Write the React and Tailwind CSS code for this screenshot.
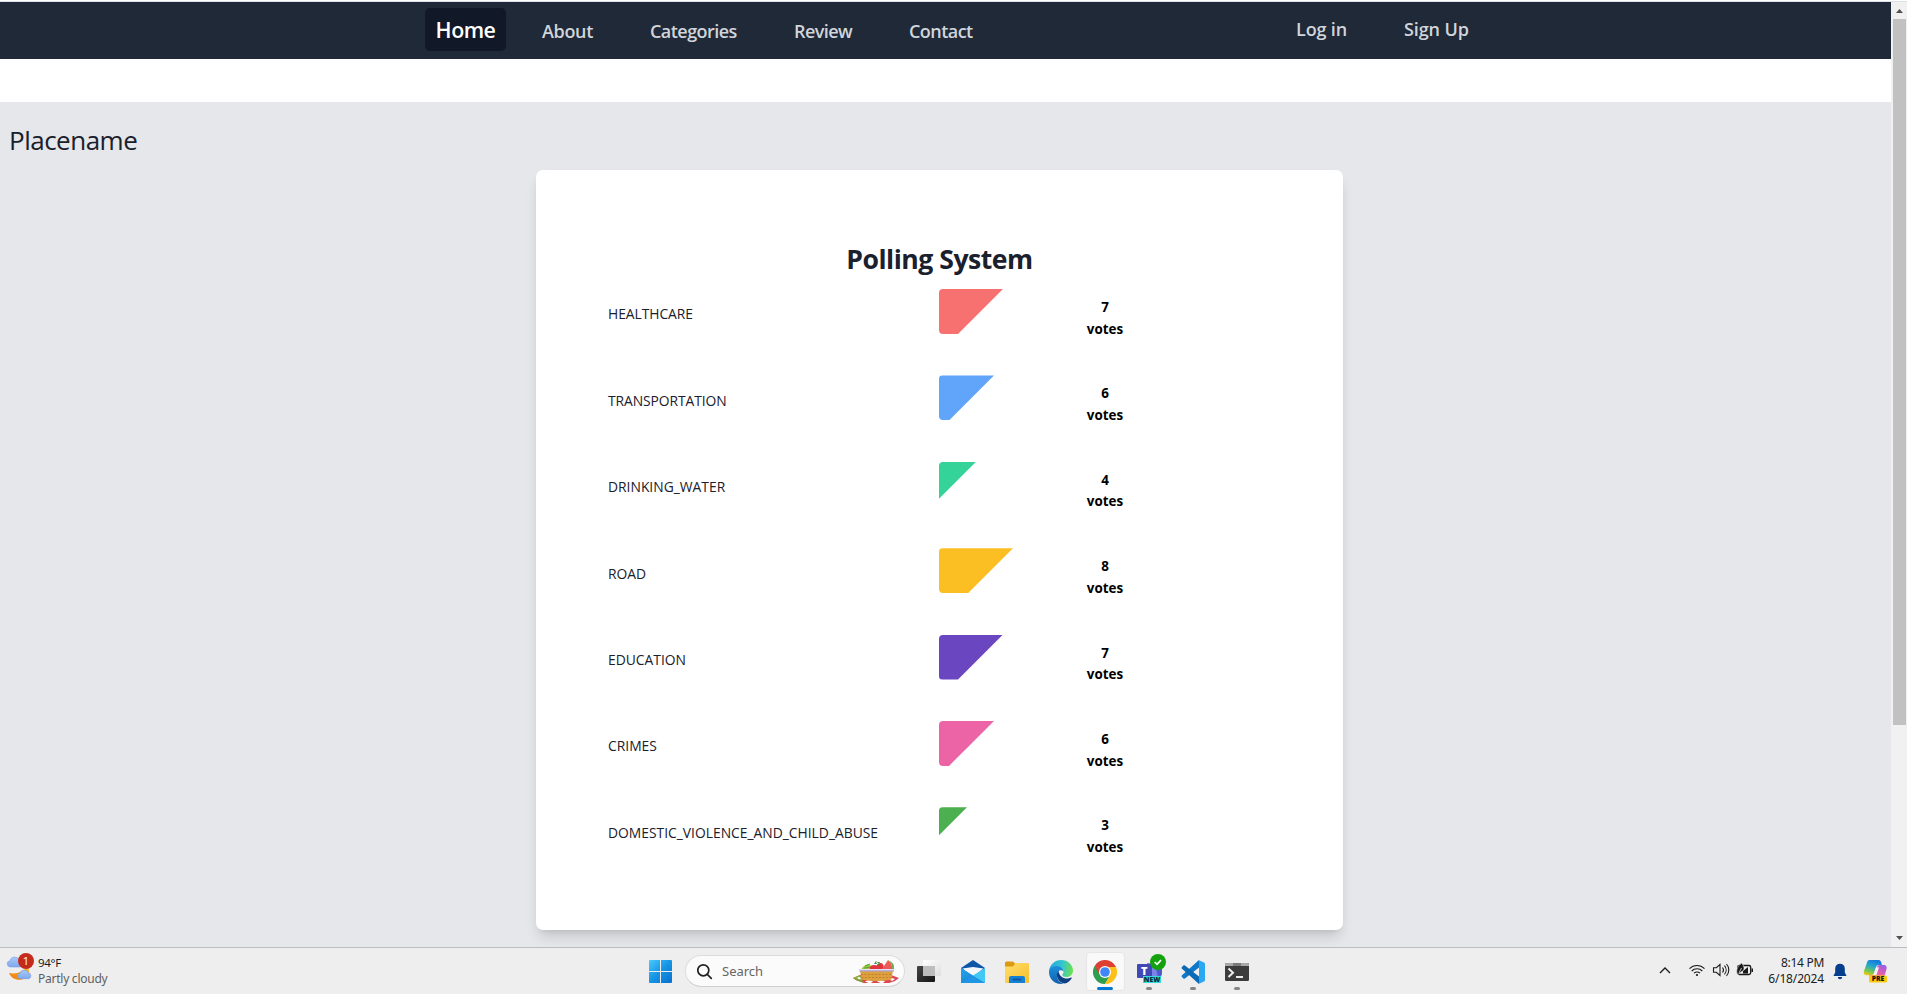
import React from "react";

const POLLS = [
  { label: "HEALTHCARE", votes: 7, color: "#f87171", track: "tracking-[-0.05px]" },
  { label: "TRANSPORTATION", votes: 6, color: "#60a5fa", track: "tracking-[-0.08px]" },
  { label: "DRINKING_WATER", votes: 4, color: "#34d399", track: "" },
  { label: "ROAD", votes: 8, color: "#fbbf24", track: "" },
  { label: "EDUCATION", votes: 7, color: "#6b46c1", track: "" },
  { label: "CRIMES", votes: 6, color: "#ed64a6", track: "" },
  { label: "DOMESTIC_VIOLENCE_AND_CHILD_ABUSE", votes: 3, color: "#4caf50", track: "" },
];

function NavBar() {
  return (
    <nav className="flex h-[57px] shrink-0 whitespace-nowrap bg-[#1f2937] pl-[425px] pt-[6px] text-[18px] font-semibold leading-[24px] text-[#d1d5db]">
      <a className="flex h-[43px] w-[81px] items-center justify-center rounded-[5px] bg-[#111827] text-[21.4px] tracking-[-0.5px] text-white">Home</a>
      <div className="ml-[36px] flex gap-[57px] pt-[11px]">
        <a className="w-[51px] tracking-[-0.35px]">About</a>
        <a className="w-[87px] tracking-[-0.55px]">Categories</a>
        <a className="w-[58px] tracking-[-0.55px]">Review</a>
        <a className="w-[64px] tracking-[-0.55px]">Contact</a>
      </div>
      <div className="ml-[323px] flex gap-[58px] pt-[9px]">
        <a className="w-[50px] tracking-[-0.15px]">Log in</a>
        <a className="w-[64px] tracking-[-0.1px]">Sign Up</a>
      </div>
    </nav>
  );
}

function PollRow({ label, votes, color, track }) {
  const width = Math.round(votes * 9.14 + 0.4);
  return (
    <li className="flex h-[86.4px]">
      <div className={`w-[331px] whitespace-nowrap pt-[14.4px] text-[13.85px] leading-[22px] text-[#1a202c] ${track}`}>{label}</div>
      <div className="w-[146px]">
        <div
          className="h-[45px] w-[146px] rounded-[4px]"
          style={{ backgroundColor: color, clipPath: `polygon(0 0, ${width}px 0, ${width - 45}px 45px, 0 ${width < 45 ? width : 45}px)` }}
        />
      </div>
      <div className="w-[40px] pt-[8px] text-center text-[13.4px] font-bold leading-[21.6px] text-black">
        <div>{votes}</div>
        <div>votes</div>
      </div>
    </li>
  );
}

function Scrollbar() {
  return (
    <div className="flex w-[16px] shrink-0 flex-col items-center bg-[#f1f1f1]">
      <svg className="h-[17px] w-[16px]" viewBox="0 0 16 17"><path d="M5 11h7L8.5 7z" fill="#505050" /></svg>
      <div className="ml-[1px] h-[706px] w-[13px] bg-[#c1c1c1]" />
      <svg className="mt-auto h-[17px] w-[16px]" viewBox="0 0 16 17"><path d="M5 6h7L8.5 10z" fill="#505050" /></svg>
    </div>
  );
}

function WeatherIcon() {
  return (
    <svg className="h-[32px] w-[30px]" viewBox="5 951 30 32">
      <defs>
        <linearGradient id="cloud" x1="0" y1="0" x2="0" y2="1"><stop offset="0" stopColor="#a9c9f8" /><stop offset="1" stopColor="#7ea8ee" /></linearGradient>
        <linearGradient id="moon" x1="0" y1="1" x2="1" y2="0"><stop offset="0" stopColor="#ee7a10" /><stop offset="1" stopColor="#fbbf24" /></linearGradient>
      </defs>
      <path d="M27 966c4 5 2 12-5 13.500c-6 1.200-11-1.500-13-6.500c7 1.500 15-1 18-7z" fill="url(#moon)" />
      <path d="M10 967a3.200 3.200 0 0 1-.2-6.300a5 5 0 0 1 9.500-.5a3.500 3.500 0 0 1 .7 6.800z" fill="url(#cloud)" stroke="#7ba3e6" strokeWidth=".6" />
      <path d="M20 978.700a2.800 2.800 0 0 1-.1-5.500a4.500 4.500 0 0 1 8.300-.6a3.200 3.200 0 0 1 .6 6.100z" fill="url(#cloud)" stroke="#6f9be4" strokeWidth=".6" />
      <circle cx="26" cy="961" r="8" fill="#c42b1c" />
      <text x="26" y="965" textAnchor="middle" fontSize="11" fill="#fff" fontFamily="Open Sans">1</text>
    </svg>
  );
}

function StartIcon() {
  return (
    <svg className="h-[24px] w-[24px]" viewBox="0 0 24 24">
      <defs><linearGradient id="win" x1="0" y1="0" x2="1" y2="1"><stop offset="0" stopColor="#4cc8fb" /><stop offset=".5" stopColor="#1594e4" /><stop offset="1" stopColor="#0a6fd0" /></linearGradient></defs>
      <path d="M0 1a1 1 0 0 1 1-1H11V11H0zM12 0h10a1 1 0 0 1 1 1v10H12zM0 12H11V23H1a1 1 0 0 1-1-1zM12 12h11v10a1 1 0 0 1-1 1H12z" fill="url(#win)" />
    </svg>
  );
}

function PicnicIcon() {
  return (
    <svg className="h-[25px] w-[46px]" viewBox="0 0 46 25">
      <path d="M0 19l7-3h31l8 3-4 3-6 2H11L3 21z" fill="#dd4852" />
      <path d="M0 19l7-3 3 7z" fill="#8bb53c" /><path d="M0 19l10 4 3 1.500-9-3z" fill="#5e9732" />
      <path d="M12 22.500l4-2 4 2-3 2zM24 22.500l4-2 4 2-3 2zM36 20l3-1 3 1-3 2zM4 19l2-1 2 1-1 1.500z" fill="#fff" />
      <path d="M7 11.500h33l-1.500 9q-16 3-30 0z" fill="#dda03f" />
      <path d="M8 15.500h31M8.500 18.500h30" stroke="#bd7626" strokeWidth=".8" strokeDasharray="2 1.500" />
      <path d="M8 11q2-5 8-6l3 3 2 3z" fill="#9acb45" /><path d="M12 7l5-2M11 9l8-1" stroke="#5f9f32" />
      <path d="M17 11q-1-5 4-5t5 5zM23 11q0-6 4-7t4 7z" fill="#e3343d" />
      <path d="M21 5l2-3 3 3zM23 3l2 4 2-4z" fill="#3f9146" />
      <path d="M29 10l6-9q5 4 4 9z" fill="#ee5a58" /><path d="M35 1q5 4 4 9l2 0q1-6-6-9z" fill="#64ac48" />
      <path d="M6.500 10h34.500v2.500H6.500z" fill="#ab9fd6" /><path d="M6.500 10h34.500v1.200H6.500z" fill="#e4dff5" />
    </svg>
  );
}

function TaskViewIcon() {
  return (
    <svg className="h-[24px] w-[26px]" viewBox="0 0 26 24">
      <defs>
        <linearGradient id="tvd" x1="0" y1="0" x2="1" y2="1"><stop offset="0" stopColor="#454545" /><stop offset="1" stopColor="#151515" /></linearGradient>
        <linearGradient id="tvl" x1="0" y1="0" x2="1" y2="1"><stop offset="0" stopColor="#fff" /><stop offset="1" stopColor="#dedede" /></linearGradient>
      </defs>
      <rect x="1" y="7" width="18" height="16" rx="1" fill="url(#tvd)" />
      <rect x="7" y="1" width="18" height="16" rx="1" fill="url(#tvl)" />
      <path d="M7 7h12v10H8a1 1 0 0 1-1-1z" fill="#bdbdbd" />
    </svg>
  );
}

function MailIcon() {
  return (
    <svg className="h-[24px] w-[24px]" viewBox="0 0 24 24">
      <defs><linearGradient id="mail" x1="0" y1="0" x2="1" y2="1"><stop offset="0" stopColor="#27a5ea" /><stop offset="1" stopColor="#1079d4" /></linearGradient></defs>
      <path d="M0 8L12 0l12 8-3 5H3z" fill="#0d56a8" />
      <path d="M1.500 8.500L12 7l10.500 1.500L12 17z" fill="#f3f7fb" />
      <path d="M0 8l12 7.500L24 23H0z" fill="url(#mail)" />
      <path d="M24 8v15L12 15.500z" fill="#41c8f5" /><path d="M0 23L12 15.500l12 7.500z" fill="#1e96e3" />
    </svg>
  );
}

function FolderIcon() {
  return (
    <svg className="h-[24px] w-[24px]" viewBox="0 0 24 24">
      <defs><linearGradient id="fold" x1="0" y1="0" x2="1" y2="1"><stop offset="0" stopColor="#ffdf6d" /><stop offset="1" stopColor="#f9bd2c" /></linearGradient></defs>
      <path d="M0 3a1.500 1.500 0 0 1 1.500-1.500H8l2.500 2.500V8H0z" fill="#dc9a10" />
      <path d="M0 6.500h8L10.500 3H23a1 1 0 0 1 1 1v18a1 1 0 0 1-1 1H1a1 1 0 0 1-1-1z" fill="url(#fold)" />
      <path d="M4 23v-5a2 2 0 0 1 2-2h12a2 2 0 0 1 2 2v5z" fill="#1680d2" />
      <rect x="7.500" y="18.500" width="9" height="2" rx="1" fill="#0c59a4" />
    </svg>
  );
}

function EdgeIcon() {
  return (
    <svg className="h-[24px] w-[24px]" viewBox="0 0 24 24">
      <defs>
        <linearGradient id="eg" x1="0" y1=".3" x2="1" y2=".4"><stop offset="0" stopColor="#2aa5e0" /><stop offset=".55" stopColor="#34c6ce" /><stop offset="1" stopColor="#6de04f" /></linearGradient>
        <linearGradient id="eb" x1="0" y1="0" x2="0" y2="1"><stop offset="0" stopColor="#1b90dc" /><stop offset="1" stopColor="#1160b0" /></linearGradient>
      </defs>
      <path d="M0 11.500C.5 4.500 6 0 12 0c7 0 12 5 12 10.500c0 4-3 6.500-6.500 6.500c-2.500 0-4.200-1-4.200-2c0-.8 1.200-1.300 1.200-3.200C14.500 8.500 11.500 6.500 8 6.500c-4 0-7 2.500-8 5z" fill="url(#eg)" />
      <path d="M0 12C0 8 4 6 8 6c3.500 0 6.500 2.500 6.500 5.500C12.500 9 8.500 10 8 14.500C7.500 19.500 11 23 15 23.600C7 25.500 0 20 0 12z" fill="url(#eb)" />
      <path d="M9.500 10.700C6 14 8 22 15.500 23.500c3-.5 5.800-2.700 7.200-5.300c.3-.6-.2-.9-.7-.6C17 20 10 17.500 9.500 10.700z" fill="#0d3f82" />
    </svg>
  );
}

function ChromeIcon() {
  return (
    <svg className="h-[24px] w-[24px]" viewBox="0 0 24 24">
      <path d="M12 12L1.600 6A12 12 0 0 1 22.400 6z" fill="#dd4033" />
      <path d="M12 12L1.600 6A12 12 0 0 0 12 24l5.200-9z" fill="#2f9e4f" />
      <path d="M12 6h10.400A12 12 0 0 1 12 24l5.200-9z" fill="#fbc116" />
      <path d="M12 6h10.400l.4 1H12zM1.600 6l5.200 9L12 12z" fill="#dd4033" />
      <path d="M1.600 6l5.200 9 5.200 3-1.500 3z" fill="#2f9e4f" />
      <circle cx="12" cy="12" r="6" fill="#fff" /><circle cx="12" cy="12" r="4.800" fill="#4285f4" />
    </svg>
  );
}

function TeamsIcon() {
  return (
    <svg className="h-[32px] w-[32px]" viewBox="0 0 32 32">
      <path d="M12 10h15v10a6 6 0 0 1-6 6h-3a6 6 0 0 1-6-6z" fill="#7b83eb" /><path d="M20 10h7v10a6 6 0 0 1-4 5z" fill="#5059c9" />
      <rect x="2" y="11" width="15" height="14" rx="1" fill="#4048b4" />
      <text x="9.300" y="21.500" textAnchor="middle" fontSize="11" fontWeight="800" fill="#fff" fontFamily="Open Sans">T</text>
      <rect x="8" y="23" width="18" height="7" fill="#35dbdd" />
      <text x="17" y="29" textAnchor="middle" fontSize="6.800" fontWeight="800" fill="#062c33" fontFamily="Open Sans">NEW</text>
      <circle cx="23" cy="9" r="8" fill="#13a10e" />
      <path d="M19.700 9l2.300 2.300 4-4.200" fill="none" stroke="#fff" strokeWidth="1.700" />
    </svg>
  );
}

function CodeIcon() {
  return (
    <svg className="h-[24px] w-[24px]" viewBox="0 0 24 24">
      <path d="M18 0L1 15.300c-.6.600-.6 1.200 0 1.800l1.400 1.300c.5.400 1 .4 1.500 0L18 7.500z" fill="#0f78c8" />
      <path d="M18 24L1 8.700c-.6-.6-.6-1.200 0-1.800l1.400-1.300c.5-.4 1-.4 1.500 0L18 16.500z" fill="#0b6ab4" />
      <path d="M17.500 0L23 2.500q1 .5 1 1.500v16q0 1-1 1.500L17.500 24q.8-.5.500-2V2q.3-1.500-.5-2z" fill="#2aa8f2" />
    </svg>
  );
}

function TerminalIcon() {
  return (
    <svg className="h-[24px] w-[24px]" viewBox="0 0 24 24">
      <rect x="0" y="3" width="24" height="18" rx="1.200" fill="#3c3c3c" />
      <path d="M0 6V4.200A1.200 1.200 0 0 1 1.200 3H22.800A1.200 1.200 0 0 1 24 4.200V6z" fill="#a8a8a8" /><path d="M8 3h8v3H8z" fill="#7b7b7b" />
      <path d="M3.500 8.500l4.500 4.200-4.500 4.200" fill="none" stroke="#ededed" strokeWidth="2" /><path d="M11 17h7" stroke="#fff" strokeWidth="1.800" />
    </svg>
  );
}

function TaskButton({ children, state }) {
  return (
    <div className="flex w-[44px] justify-center">
      <div className={`flex h-[39px] w-[39px] flex-col items-center ${state === "active" ? "rounded-[4px] border border-[#e6e6e6] bg-[#f9f9f9]" : "border border-transparent"}`}>
        <div className="flex h-[34px] items-center justify-center pt-[3px]">{children}</div>
        {state === "active" && <div className="h-[3px] w-[16px] shrink-0 rounded-full bg-[#0078d4]" />}
        {state === "open" && <div className="h-[3px] w-[6px] shrink-0 rounded-full bg-[#868686]" />}
      </div>
    </div>
  );
}

function TrayIcons() {
  return (
    <div className="flex items-center text-[#1a1a1a]">
      <svg className="h-[12px] w-[12px]" viewBox="0 0 12 12"><path d="M1 9l5-5 5 5" fill="none" stroke="currentColor" strokeWidth="1.300" /></svg>
      <svg className="ml-[17px] h-[14px] w-[18px]" viewBox="0 0 18 14" fill="none" stroke="currentColor" strokeWidth="1.100">
        <path d="M1.500 5.700a10.300 10.300 0 0 1 15 0M3.700 8a7.300 7.300 0 0 1 10.600 0M6 10.200a4.200 4.200 0 0 1 6 0" /><circle cx="9" cy="12" r="1.100" fill="currentColor" stroke="none" />
      </svg>
      <svg className="ml-[6px] h-[16px] w-[18px]" viewBox="0 0 18 16" fill="none" stroke="currentColor" strokeWidth="1.100">
        <path d="M1.500 5.700h2.800L8 2.500v11L4.300 10.300H1.500zM10.500 5.500a4 4 0 0 1 0 5M12.500 3.700a6.500 6.500 0 0 1 0 8.600M14.500 2a9 9 0 0 1 0 12" />
      </svg>
      <svg className="ml-[6px] h-[16px] w-[18px]" viewBox="0 0 18 16">
        <rect x="1.700" y="3.500" width="13" height="9" rx="1.800" fill="none" stroke="currentColor" strokeWidth="1.300" /><path d="M7 9l5-4v6.500H7zM15.500 6.500h1.500v3.500h-1.500z" fill="currentColor" />
        <path d="M1 12C0 7 2 4 5.500 1C9 5 9 8.500 5 10L3 12z" fill="currentColor" stroke="#eee" strokeWidth=".6" /><path d="M3 11l2.500-5" stroke="#eee" strokeWidth=".8" />
      </svg>
    </div>
  );
}

function CopilotIcon() {
  return (
    <svg className="h-[24px] w-[25px]" viewBox="0 0 25 24">
      <defs>
        <linearGradient id="c1" x1=".6" y1="0" x2=".2" y2="1"><stop offset="0" stopColor="#1877dc" /><stop offset=".4" stopColor="#23a7cf" /><stop offset=".75" stopColor="#76c84e" /><stop offset="1" stopColor="#f5c816" /></linearGradient>
        <linearGradient id="c2" x1=".8" y1="0" x2=".3" y2="1"><stop offset="0" stopColor="#9a5ce8" /><stop offset=".5" stopColor="#e05fae" /><stop offset="1" stopColor="#fa8a5c" /></linearGradient>
      </defs>
      <path d="M6.500 1h9c2 0 2.500 1.500 3 3.500l.5 1.500h-3c-2 0-2.700 1-3.300 3l-1.700 5c-.5 1.500-1.300 2.200-3 2.200H3.500C1 16.200.3 14.500 1 12L4 3.500C4.500 2 5 1 6.500 1z" fill="url(#c1)" />
      <path d="M17 6h3.500c2.800 0 3.500 1.800 3 4L21.500 17c-.5 2-1.500 3.500-3.500 3.500H9.500c-1.500 0-2.500-1-3-3l-.3-1.300H9c1.700 0 2.500-.7 3-2.200l1.800-5.300C14.500 7 15 6 17 6z" fill="url(#c2)" />
      <path d="M13 8.500l3-.3L13.500 16h-3.200l.7-1.500z" fill="#f7eef8" />
      <rect x="6" y="16.500" width="18" height="7" rx="1.500" fill="#ffc90e" />
      <text x="15" y="22.400" textAnchor="middle" fontSize="6.800" fontWeight="800" fill="#1c1400" fontFamily="Open Sans">PRE</text>
    </svg>
  );
}

function Taskbar() {
  return (
    <footer className="flex h-[47px] shrink-0 border-t border-[#bdbdc1] bg-[#eeeeee] font-['Noto_Sans'] text-[12px] leading-[16px]">
      <div className="flex w-[649px] pl-[5px] pt-[3px]">
        <WeatherIcon />
        <div className="ml-[3px] whitespace-nowrap pt-[4px] leading-[15.5px]">
          <div className="text-[11.5px] tracking-[-0.3px] text-[#1b1b1b]">94°F</div>
          <div className="tracking-[-0.25px] text-[#5f5f5f]">Partly cloudy</div>
        </div>
      </div>
      <div className="flex w-[1008px]">
        <div className="pt-[12px]"><StartIcon /></div>
        <div className="ml-[12px] mt-[7px] flex h-[32px] w-[220px] items-center rounded-full border border-[#dcdcdc] border-b-[#cfcfcf] bg-[#fbfbfb] pl-[10px] pr-[5px]">
          <svg className="h-[17px] w-[17px]" viewBox="0 0 17 17" fill="none" stroke="#222" strokeWidth="1.700"><circle cx="7.300" cy="7.300" r="5.500" /><path d="M11.300 11.300l4 4" strokeLinecap="round" /></svg>
          <span className="ml-[9px] text-[13px] text-[#666]">Search</span>
          <div className="ml-auto"><PicnicIcon /></div>
        </div>
        <div className="ml-[11px] pt-[11px]"><TaskViewIcon /></div>
        <div className="ml-[9px] flex pt-[4px]">
          <TaskButton><MailIcon /></TaskButton>
          <TaskButton><FolderIcon /></TaskButton>
          <TaskButton><EdgeIcon /></TaskButton>
          <TaskButton state="active"><ChromeIcon /></TaskButton>
          <TaskButton state="open"><div className="-mt-[5px] ml-[4px]"><TeamsIcon /></div></TaskButton>
          <TaskButton state="open"><CodeIcon /></TaskButton>
          <TaskButton state="open"><TerminalIcon /></TaskButton>
        </div>
      </div>
      <div className="flex">
        <div className="ml-[2px] flex pb-[2px]"><TrayIcons /></div>
        <div className="w-[70px] whitespace-nowrap pt-[7px] text-right text-[#1b1b1b]">
          <div className="tracking-[-0.3px]">8:14 PM</div>
          <div className="tracking-[-0.15px]">6/18/2024</div>
        </div>
        <svg className="ml-[9px] mt-[15px] h-[17px] w-[14px]" viewBox="0 0 14 17"><path d="M7 .7a4.800 4.800 0 0 0-4.800 4.800v4L.7 12.300V13h12.600v-.7L11.800 9.500v-4A4.800 4.800 0 0 0 7 .7zM4.800 14h4.400a2.200 2.200 0 0 1-4.400 0z" fill="#053e8f" /></svg>
        <div className="ml-[16px] mt-[11px]"><CopilotIcon /></div>
      </div>
    </footer>
  );
}

export default function App() {
  return (
    <div className="flex h-[994px] w-[1907px] flex-col overflow-hidden bg-white font-['Open_Sans',sans-serif]">
      <div className="h-[2px] shrink-0 border-b border-[#dee1e6]" />
      <div className="flex h-[945px] shrink-0">
        <div className="flex min-w-0 flex-1 flex-col overflow-hidden">
          <NavBar />
          <main className="mt-[43px] flex-1 bg-[#e5e7eb] pt-[20px]">
            <h1 className="ml-[9px] h-[48px] text-[26px] leading-[37px] tracking-[-0.5px] text-[#1a202c]">Placename</h1>
            <section className="ml-[536px] h-[760px] w-[807px] rounded-[7px] bg-white px-[72px] pt-[73px] shadow-[0_9px_14px_-3px_rgba(0,0,0,0.15),0_4px_6px_-4px_rgba(0,0,0,0.1)]">
              <h2 className="h-[46px] text-center text-[26.6px] font-bold leading-[32px] tracking-[-0.5px] text-[#1a202c]">Polling System</h2>
              <ul>
                {POLLS.map((poll) => <PollRow key={poll.label} {...poll} />)}
              </ul>
            </section>
          </main>
        </div>
        <Scrollbar />
      </div>
      <Taskbar />
    </div>
  );
}
